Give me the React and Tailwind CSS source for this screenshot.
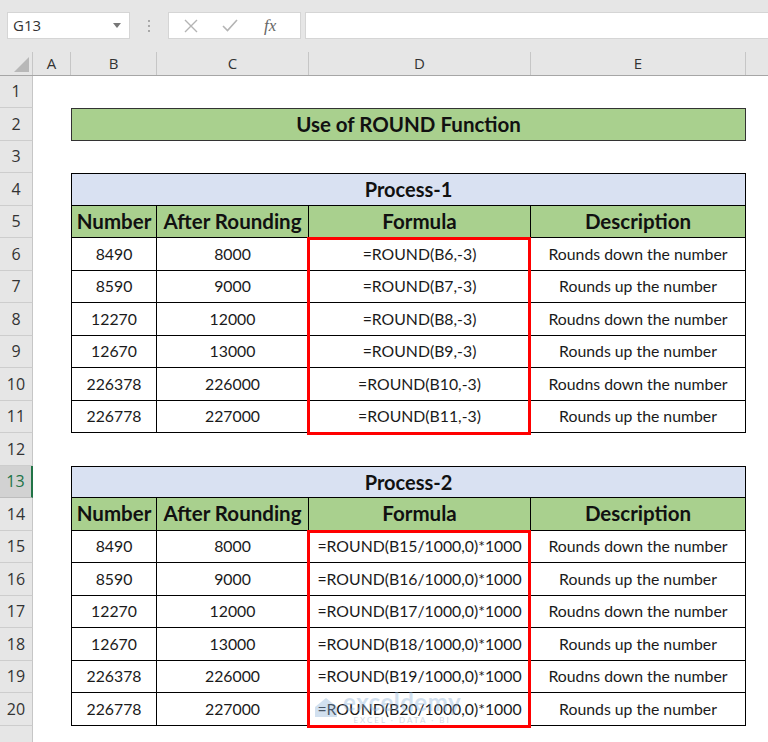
import React from 'react';

const COLS = [
    { label: 'A', w: 38 },
    { label: 'B', w: 86 },
    { label: 'C', w: 152 },
    { label: 'D', w: 222 },
    { label: 'E', w: 215 },
    { label: '', w: 40 },
];

const P1 = [
    ['8490', '8000', '=ROUND(B6,-3)', 'Rounds down the number'],
    ['8590', '9000', '=ROUND(B7,-3)', 'Rounds up the number'],
    ['12270', '12000', '=ROUND(B8,-3)', 'Roudns down the number'],
    ['12670', '13000', '=ROUND(B9,-3)', 'Rounds up the number'],
    ['226378', '226000', '=ROUND(B10,-3)', 'Roudns down the number'],
    ['226778', '227000', '=ROUND(B11,-3)', 'Rounds up the number'],
];

const P2 = [
    ['8490', '8000', '=ROUND(B15/1000,0)*1000', 'Rounds down the number'],
    ['8590', '9000', '=ROUND(B16/1000,0)*1000', 'Rounds up the number'],
    ['12270', '12000', '=ROUND(B17/1000,0)*1000', 'Roudns down the number'],
    ['12670', '13000', '=ROUND(B18/1000,0)*1000', 'Rounds up the number'],
    ['226378', '226000', '=ROUND(B19/1000,0)*1000', 'Roudns down the number'],
    ['226778', '227000', '=ROUND(B20/1000,0)*1000', 'Rounds up the number'],
];

const HEADERS = ['Number', 'After Rounding', 'Formula', 'Description'];

function FormulaBar() {
    return (
        <div className="h-[52px] bg-[#e6e6e6] flex items-start pt-[12px] font-['Open_Sans',sans-serif]">
            {/* Name box */}
            <div className="ml-[7px] w-[123px] h-[27px] bg-white border border-[#d5d5d5] flex items-center justify-between pl-[5px] pr-[8px]">
                <span className="text-[15px] text-[#333]">G13</span>
                <svg width="8" height="5" viewBox="0 0 8 5"><path d="M0 0h8L4 5z" fill="#777" /></svg>
            </div>
            {/* dotted separator */}
            <div className="w-[38px] h-[27px] flex flex-col items-center justify-center gap-[3px]">
                <span className="w-[2px] h-[2px] bg-[#a8a8a8]" />
                <span className="w-[2px] h-[2px] bg-[#a8a8a8]" />
                <span className="w-[2px] h-[2px] bg-[#a8a8a8]" />
            </div>
            {/* fx buttons */}
            <div className="w-[133px] h-[27px] bg-white border border-[#d5d5d5] flex items-center">
                <svg className="ml-[15px]" width="14" height="14" viewBox="0 0 14 14">
                    <path d="M1 1l12 12M13 1L1 13" stroke="#b4b4b4" strokeWidth="1.4" />
                </svg>
                <svg className="ml-[24px]" width="16" height="13" viewBox="0 0 16 13">
                    <path d="M1 7l4.5 4.5L15 1" stroke="#b4b4b4" strokeWidth="1.6" fill="none" />
                </svg>
                <span className="ml-[26px] text-[17px] italic text-[#666] font-['Liberation_Serif',serif] leading-none">fx</span>
            </div>
            <div className="ml-[4px] flex-1 h-[27px] bg-white border border-[#d5d5d5] border-r-0" />
        </div>
    );
}

function ColumnHeaders() {
    return (
        <div className="flex h-[23.5px] bg-[#e6e6e6] border-b border-[#a6a6a6] font-['Open_Sans',sans-serif]">
            <div className="w-[33px] shrink-0 border-r border-[#c6c6c6] flex items-end justify-end pr-[3px] pb-[3px]">
                <svg width="15" height="15" viewBox="0 0 15 15"><path d="M15 0v15H0z" fill="#b8b8b8" /></svg>
            </div>
            {COLS.map((c, i) => (
                <div
                    key={i}
                    style={{ width: c.w }}
                    className="shrink-0 border-r border-[#c6c6c6] flex items-center justify-center text-[15px] text-[#333]"
                >
                    {c.label}
                </div>
            ))}
        </div>
    );
}

function RowHeaders() {
    const rows = Array.from({ length: 21 }, (_, i) => i + 1);
    return (
        <div className="w-[33px] shrink-0 bg-[#e6e6e6] font-['Open_Sans',sans-serif]">
            {rows.map((n) => (
                <div
                    key={n}
                    className={
                        n === 13
                            ? 'h-[32.5px] bg-[#d2d2d2] border-b border-[#bdbdbd] border-r-2 border-r-[#217346] flex items-center justify-center text-[16px] text-[#217346]'
                            : 'h-[32.5px] border-b border-[#cdcdcd] border-r border-r-[#c6c6c6] flex items-center justify-center text-[16px] text-[#333]'
                    }
                >
                    {n < 21 ? n : ''}
                </div>
            ))}
        </div>
    );
}

function ProcessTable({ title, rows }) {
    return (
        <div className="relative w-[675px] border-l border-t border-black">
            <div className="h-[31.5px] border-r border-b border-black bg-[#d9e1f2] flex items-center justify-center font-bold text-[20px] text-[#111]">
                {title}
            </div>
            <div className="grid grid-cols-[85px_152px_222px_215px]">
                {HEADERS.map((h) => (
                    <div key={h} className="h-[32.5px] border-r border-b border-black bg-[#a9d08e] flex items-center justify-center font-bold text-[20.5px] text-[#111] whitespace-nowrap">
                        {h}
                    </div>
                ))}
                {rows.map((r, ri) =>
                    r.map((v, ci) => (
                        <div key={ri + '-' + ci} className="h-[32.5px] border-r border-b border-black bg-white flex items-center justify-center text-[15.8px] text-[#1a1a1a] whitespace-nowrap">
                            {v}
                        </div>
                    ))
                )}
            </div>
            {/* highlighted formula column */}
            <div className="absolute left-[235px] top-[63px] w-[224px] h-[198px] border-[3.5px] border-[#ff0000] pointer-events-none" />
        </div>
    );
}

export default function App() {
    return (
        <div className="relative w-[768px] h-[742px] overflow-hidden bg-white font-['Lato',sans-serif]">
            <FormulaBar />
            <ColumnHeaders />
            <div className="flex">
                <RowHeaders />
                <div className="pl-[38px]">
                    <div className="h-[32.5px]" />
                    <div className="w-[675px] h-[32.5px] border border-[#333] bg-[#a9d08e] flex items-center justify-center font-bold text-[20.5px] text-[#111]">
                        Use of ROUND Function
                    </div>
                    <div className="h-[32.5px]" />
                    <ProcessTable title="Process-1" rows={P1} />
                    <div className="h-[32.5px]" />
                    <ProcessTable title="Process-2" rows={P2} />
                </div>
            </div>

            {/* watermark */}
            <div className="absolute left-[313px] top-[690px] flex items-center gap-[4px] opacity-40 pointer-events-none">
                <svg width="26" height="22" viewBox="0 0 26 22">
                    <path d="M2 11L13 2l11 9v10H2z" fill="#8fb3d9" />
                </svg>
                <div className="flex flex-col items-center leading-none">
                    <span className="text-[24px] font-bold text-[#8fb3d9] tracking-[0.5px]">exceldemy</span>
                    <span className="text-[8px] text-[#8aa0b8] tracking-[2px] mt-[2px]">EXCEL · DATA · BI</span>
                </div>
            </div>
        </div>
    );
}
